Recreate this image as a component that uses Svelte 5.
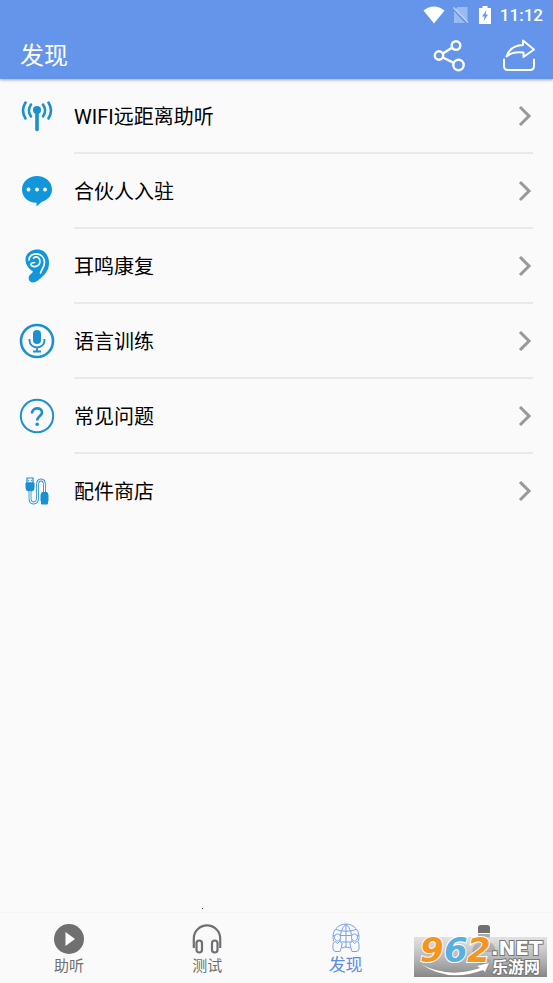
<script lang="ts">
  type Item = { icon: string; label: string }

  const items: Item[] = [
    { icon: 'wifi', label: 'WIFI远距离助听' },
    { icon: 'chat', label: '合伙人入驻' },
    { icon: 'ear', label: '耳鸣康复' },
    { icon: 'mic', label: '语言训练' },
    { icon: 'help', label: '常见问题' },
    { icon: 'cable', label: '配件商店' },
  ]

  const tabs: Item[] = [
    { icon: 'play', label: '助听' },
    { icon: 'headphones', label: '测试' },
    { icon: 'globe', label: '发现' },
    { icon: 'person', label: '我' },
  ]

  let active = $state('发现')
</script>

<div class="page">
  <header>
    <div class="status">
      <svg class="wifi" viewBox="0 0 22 18"><path d="M0.5 4.5 Q11 -3.5 21.5 4.5 L11 17.5Z" fill="#fff" /></svg>
      <svg class="sim" viewBox="0 0 16 18">
        <path d="M4.500 1H14.500V15L2.500 3ZM1 5L12 17H1Z" fill="#fff" opacity="0.35" />
        <path d="M0.500 1.500L15 16.500" stroke="#fff" stroke-width="1.300" opacity="0.6" />
      </svg>
      <svg class="battery" viewBox="0 0 12 18">
        <path d="M3.500 0h5v2H12v16H0V2h3.500Z" fill="#fff" />
        <path d="M7.500 4L3 10.500h2.600L4.700 15L9 8.600H6.500Z" fill="#6495ea" />
      </svg>
      <span class="clock">11:12</span>
    </div>
    <div class="toolbar">
      <h1>发现</h1>
      <button aria-label="关联">
        <svg viewBox="0 0 34 34" fill="none" stroke="#fff" stroke-width="2.400">
          <circle cx="7" cy="17.500" r="4.200" />
          <circle cx="24" cy="7.500" r="4.300" />
          <circle cx="26.500" cy="27" r="5.200" />
          <path d="M10.800 15.500L20 9.700M10.800 19.500L21.800 24.800" />
        </svg>
      </button>
      <button aria-label="分享">
        <svg viewBox="0 0 34 34" fill="none" stroke="#fff" stroke-width="2" stroke-linejoin="round" stroke-linecap="round">
          <path d="M2 21.500V28q0 4 4 4H28q4 0 4-4V21.500" />
          <path d="M4.500 18.500Q8 7.500 21 7V2.500L32 11.500L21.500 19V14.500Q10.500 13 4.500 18.500Z" />
        </svg>
      </button>
    </div>
  </header>

  <main>
    <ul>
      {#each items as item}
        <li>
          <button class="row">
            <svg class="icon" viewBox="0 0 36 36" fill="none" stroke="#1b8fcf">
              {#if item.icon === 'wifi'}
                <circle cx="18" cy="12" r="4" fill="#1b8fcf" stroke="none" />
                <g stroke-linecap="round">
                  <path d="M18 13V31.500" stroke-width="3.600" />
                  <path d="M12 6.500q-4.200 6 0 12M24 6.500q4.200 6 0 12" stroke-width="2.600" />
                  <path d="M6.500 4.500q-5 8 0 16M29.500 4.500q5 8 0 16" stroke-width="2.600" />
                </g>
              {:else if item.icon === 'chat'}
                <path d="M18 3C26 3 33 8.500 33 16.500C33 23 28 27.500 22.500 29L17.500 33.500V29.800C9 29.600 3 24 3 16.500C3 8.500 10 3 18 3Z" fill="#1296db" stroke="none" />
                <g fill="#fff" stroke="none">
                  <circle cx="9.500" cy="16.500" r="1.900" />
                  <circle cx="18" cy="16.500" r="1.900" />
                  <circle cx="26" cy="16.500" r="1.900" />
                </g>
              {:else if item.icon === 'ear'}
                <path d="M18.500 1.500C25.500 1.500 30 7.500 30 15C30 24 24 28 19.500 32C16 35 11.500 35.500 10 32C8.500 27 12.500 26.500 14 23.500C9 20.500 6.500 16 6.500 11.500C6.500 5.500 12 1.500 18.500 1.500Z" fill="#1296db" stroke="none" />
                <path d="M10 12C10 3.500 25.500 3.500 25.500 14.500C25.500 19 22.500 21.500 21.500 25" stroke="#fff" stroke-width="1.700" stroke-linecap="round" />
                <path d="M14.500 10C17.500 7.500 21 9.500 21 13.500C20.500 19 14 20 12 17Q11.500 14.500 15.500 14.500" stroke="#fff" stroke-width="1.700" stroke-linecap="round" />
              {:else if item.icon === 'mic'}
                <circle cx="18" cy="18" r="16" stroke-width="2.600" />
                <rect x="14" y="7" width="8" height="14" rx="4" fill="#1b8fcf" stroke="none" />
                <path d="M10.500 16v1.500a7.500 7 0 0 0 15 0V16M18 24.500V28M14 28.500h8" stroke-width="1.800" />
              {:else if item.icon === 'help'}
                <circle cx="18" cy="18" r="16.200" stroke-width="2" />
                <path d="M13 15.500C13 8.800 23 8.800 23 14.500C23 18 18.200 18 18.200 22.500" stroke-width="2.600" />
                <circle cx="18.200" cy="26.300" r="1.800" fill="#1b8fcf" stroke="none" />
              {:else}
                <path d="M8 5h6v5H8Z" stroke-width="1.200" />
                <path d="M9.700 7v1.200M12.300 7v1.200" />
                <path d="M7 10h8v5q0 3-3 3h-2q-3 0-3-3Z" fill="#1b8fcf" />
                <path d="M22 22q0-3 3-3h1q3 0 3 3v6H22Z" fill="#1b8fcf" />
                <path d="M22.500 28h6v3h-6Z" fill="#1b8fcf" />
                <path d="M11 18V25q0 5 3.500 5q4 0 4-5V12q0-5 3.500-5q3.500 0 3.500 5V19" stroke-width="2.800" />
                <path d="M11 18V25q0 5 3.500 5q4 0 4-5V12q0-5 3.500-5q3.500 0 3.500 5V19" stroke="#fafafa" stroke-width="1.200" />
              {/if}
            </svg>
            <span class="label">{item.label}</span>
            <svg class="chevron" viewBox="0 0 14 22"><path d="M2 2L11 11L2 20" fill="none" stroke="#999" stroke-width="3" /></svg>
          </button>
        </li>
      {/each}
    </ul>
  </main>

  <nav>
    <span class="speck"></span>
    {#each tabs as tab}
      <button class="tab" class:active={active === tab.label} onclick={() => (active = tab.label)}>
        <svg viewBox="0 0 32 32" fill="none" stroke="#707070">
          {#if tab.icon === 'play'}
            <circle cx="16" cy="16" r="15" fill="#707070" stroke="none" />
            <path d="M12.500 9L22 16L12.500 23Z" fill="#fff" stroke="none" />
          {:else if tab.icon === 'headphones'}
            <path d="M2.800 25V15.500a13.200 13.200 0 0 1 26.400 0V25" stroke-width="2.200" />
            <rect x="5.500" y="17.500" width="5.500" height="12" rx="2.700" stroke-width="2.200" />
            <rect x="21" y="17.500" width="5.500" height="12" rx="2.700" stroke-width="2.200" />
          {:else if tab.icon === 'globe'}
            <g stroke="#7ba1e6" stroke-width="1">
              <path d="M3.500 18C1 8 8 1 16 1S31 8 28.500 18" />
              <path d="M16 1V25M16 1Q9.500 7 10 19M16 1Q22.500 7 22 19M6 6.500Q16 10 26 6.500M3 12.500H29M11 19H21M12 25Q16 22.500 20 25" />
              <path d="M7.500 11c4.500 0 3.500 7 0 7s-4.500-7 0-7ZM24.500 11c4.500 0 3.500 7 0 7s-4.500-7 0-7Z" fill="#fafafa" />
              <path d="M5 18.500q-2 0-2 3v4q0 3 3 3h4q2-5 2-8q-1-2-2.500-2L7.500 20.500ZM27 18.500q2 0 2 3v4q0 3-3 3h-4q-2-5-2-8q1-2 2.500-2L24.500 20.500Z" fill="#fafafa" />
            </g>
          {:else}
            <path d="M10 10V5q0-3 3-3h6q3 0 3 3v5Z" fill="#707070" stroke="none" />
            <path d="M10 11h12q0 8-6 8t-6-8Z" fill="#aaa" stroke="none" />
            <path d="M4 29q1-9 8-10l4 3l4-3q7 1 8 10Z" fill="#707070" stroke="none" />
          {/if}
        </svg>
        <span>{tab.label}</span>
      </button>
    {/each}
    <svg class="watermark" viewBox="0 0 133 40">
      <defs>
        <linearGradient id="shade" x1="0" y1="0" x2="0" y2="1">
          <stop offset="0" stop-color="#d8d8d8" stop-opacity="0.7" />
          <stop offset="1" stop-color="#808080" stop-opacity="0.95" />
        </linearGradient>
      </defs>
      <rect width="133" height="40" fill="url(#shade)" />
      <path d="M7 27Q34 42 66 31L63 29L75 26L71 35L69 33Q34 46 7 27Z" fill="#fff" />
      <g class="digits">
        <text x="6" y="25" fill="#f7941d">9</text>
        <text x="30" y="25" fill="#5aaee0">6</text>
        <text x="53" y="25" fill="#f7941d">2</text>
      </g>
      <text class="net" x="77" y="18">.NET</text>
      <text class="site" x="78" y="36">乐游网</text>
    </svg>
  </nav>
</div>

<style>
  :global(body) {
    margin: 0;
    background: #fafafa;
  }

  .page {
    display: flex;
    flex-direction: column;
    min-height: 100vh;
    font-family: Roboto, 'Noto Sans CJK SC', sans-serif;
    color: #000;
  }

  button {
    padding: 0;
    border: 0;
    background: none;
    color: inherit;
    font: inherit;
    cursor: pointer;
  }

  svg {
    display: block;
    flex: none;
  }

  header {
    background: #6495ea;
    color: #fff;
    box-shadow: 0 1px 3px rgba(0, 0, 0, 0.35);
  }

  .status {
    display: flex;
    align-items: center;
    justify-content: flex-end;
    height: 30px;
    padding-right: 10px;
  }

  .status .wifi {
    width: 22px;
    height: 18px;
    margin-right: 8px;
  }

  .status .sim {
    width: 16px;
    height: 18px;
    margin-right: 10px;
  }

  .status .battery {
    width: 12px;
    height: 18px;
    margin-right: 9px;
  }

  .clock {
    font-size: 17px;
    font-weight: 500;
  }

  .toolbar {
    display: flex;
    align-items: center;
    gap: 36px;
    height: 49px;
    padding: 0 17px 0 20px;
  }

  .toolbar svg {
    width: 34px;
    height: 34px;
  }

  h1 {
    flex: 1;
    margin: 0;
    padding-top: 2px;
    font-size: 24px;
    font-weight: 400;
    line-height: 48px;
  }

  main {
    flex: 1;
  }

  ul {
    margin: 0;
    padding: 0;
    list-style: none;
  }

  .row {
    display: grid;
    grid-template-columns: 36px 1fr 14px;
    align-items: center;
    column-gap: 19px;
    width: 100%;
    height: 75px;
    padding: 0 21px 2px 19px;
    text-align: left;
  }

  li:not(:last-child)::after {
    content: '';
    display: block;
    height: 2px;
    margin: -2px 20px 0 74px;
    background: #e9e9e9;
  }

  .icon {
    width: 36px;
    height: 36px;
  }

  .label {
    padding-top: 2px;
    font-size: 20px;
    line-height: 30px;
  }

  .chevron {
    width: 14px;
    height: 22px;
  }

  nav {
    position: relative;
    display: grid;
    grid-template-columns: repeat(4, 1fr);
    height: 70px;
    border-top: 1px solid #f4f4f4;
  }

  .speck {
    position: absolute;
    left: 202px;
    top: -5px;
    width: 1px;
    height: 1px;
    background: #356;
  }

  .tab {
    display: flex;
    flex-direction: column;
    align-items: center;
    padding-top: 10px;
    color: #707070;
    font-size: 15px;
    line-height: 22px;
  }

  .tab svg {
    width: 32px;
    height: 32px;
  }

  .tab.active {
    color: #5c8de0;
    font-size: 17px;
    line-height: 20px;
  }

  .watermark {
    position: absolute;
    right: 6px;
    bottom: 6px;
    width: 133px;
    height: 40px;
    overflow: visible;
    pointer-events: none;
  }

  .watermark text {
    stroke: #fff;
    stroke-width: 2px;
    paint-order: stroke;
    font-weight: 700;
  }

  .digits {
    font-family: 'DejaVu Sans', sans-serif;
    font-size: 34px;
    font-style: italic;
  }

  .watermark .net {
    fill: #fff;
    stroke: #777;
    font-family: 'DejaVu Sans', sans-serif;
    font-size: 20px;
  }

  .watermark .site {
    fill: #fff;
    stroke: #777;
    font-family: 'Noto Sans CJK SC', sans-serif;
    font-size: 16px;
  }
</style>
